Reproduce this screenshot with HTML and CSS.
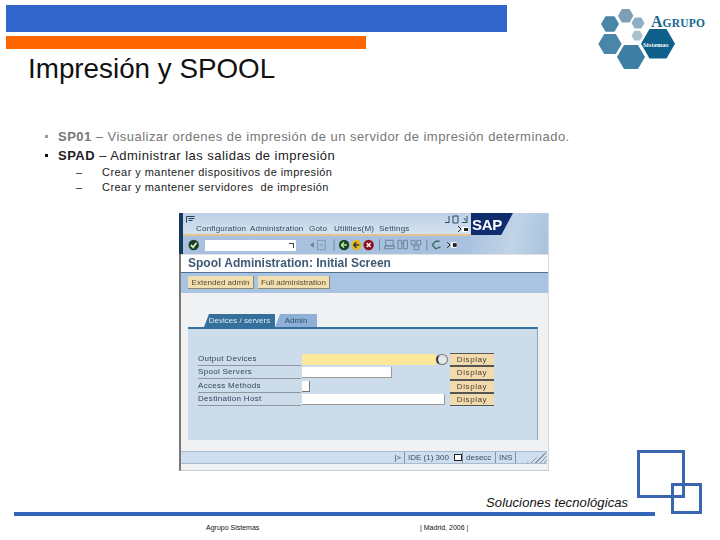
FILE: index.html
```html
<!DOCTYPE html>
<html lang="es">
<head>
<meta charset="utf-8">
<title>Impresión y SPOOL</title>
<link rel="stylesheet" href="styles.css">
</head>
<body>
<div class="slide">
  <div class="bar-blue"></div>
  <div class="bar-orange"></div>
  <h1 class="title">Impresión y SPOOL</h1>

  <svg class="logo" width="120" height="75" viewBox="590 0 120 75">
    <polygon fill="#7d9fb5" points="618,15.7 621.8,9 629.5,9 633.4,15.7 629.5,22.4 621.8,22.4"/>
    <polygon fill="#4a86a8" points="601,24 605.5,16.2 614.5,16.2 619,24 614.5,31.8 605.5,31.8"/>
    <polygon fill="#8fb0c4" points="631.5,23 634.7,17.4 641.3,17.4 644.5,23 641.3,28.6 634.7,28.6"/>
    <polygon fill="#a9c1cf" points="631.5,35.7 634.3,30.8 639.9,30.8 642.7,35.7 639.9,40.6 634.3,40.6"/>
    <polygon fill="#4a86a8" points="598.3,44 604.2,33.9 615.8,33.9 621.7,44 615.8,54.1 604.2,54.1"/>
    <polygon fill="#3d7ea3" points="617,57 624,45 638,45 645,57 638,69 624,69"/>
    <polygon fill="#0e5f8a" points="641,43.7 649.5,29 666.5,29 675,43.7 666.5,58.4 649.5,58.4"/>
    <text class="logo-word" x="651" y="27">A<tspan class="logo-caps">GRUPO</tspan></text>
    <text class="logo-sub" x="643" y="46.5">Sistemas</text>
  </svg>

  <ul class="bullets">
    <li class="dim"><b>SP01</b> – Visualizar ordenes de impresión de un servidor de impresión determinado.</li>
    <li><b>SPAD</b> – Administrar las salidas de impresión</li>
  </ul>
  <ul class="subs">
    <li>Crear y mantener dispositivos de impresión</li>
    <li>Crear y mantener servidores&nbsp; de impresión</li>
  </ul>

  <div class="sap">
    <div class="sap-top">
      <div class="sap-bars">
        <div class="menubar">
          <svg class="sys-icon" width="10" height="8" viewBox="0 0 10 8"><path d="M.5.5h8M.5.5v6M2.5 2.5h6M2.5 4.5h4" fill="none" stroke="#23405e"/></svg>
          <div class="win-ctrls">
            <svg width="23" height="9" viewBox="0 0 23 9"><path d="M0 7.5h4M4 1v7M8 1h5v7H8zM17 7.5h5M22 1v7M19 3l2 3" fill="none" stroke="#2c4a68"/></svg>
            <svg class="cust" width="10" height="7" viewBox="0 0 10 7"><rect x="4" y="1" width="6" height="5" fill="#fff"/><rect x="6" y="2" width="4" height="3" fill="#222"/><path d="M0 0l3 3-3 3" fill="none" stroke="#222"/></svg>
          </div>
          <nav class="menu">
            <span class="m1">Configuration</span>
            <span class="m2">Administration</span>
            <span class="m3">Goto</span>
            <span class="m4">Utilities(M)</span>
            <span class="m5">Settings</span>
          </nav>
        </div>
        <div class="toolbar">
          <svg class="tb-ok" width="12" height="12" viewBox="0 0 12 12"><circle cx="6" cy="6" r="5.5" fill="#1d3b2a"/><path d="M3 6l2.4 2.4L9 3.6" fill="none" stroke="#cfe8b0" stroke-width="2"/></svg>
          <div class="cmd"><span class="cmd-arrow"></span></div>
          <svg class="tb-icons" width="170" height="14" viewBox="0 0 170 14">
            <path d="M0 7l4-3v6z" fill="#6c8199"/>
            <rect x="8" y="2" width="8" height="10" fill="none" stroke="#7f93aa"/><path d="M10 7h4" stroke="#7f93aa"/>
            <g transform="translate(-3 0)">
              <path d="M28.5 1v12" stroke="#6b88a6"/>
              <circle cx="39" cy="7" r="5.5" fill="#16452a"/><path d="M36 7h6M36 7l3-3M36 7l3 3" stroke="#bfe890" stroke-width="1.5" fill="none"/>
              <circle cx="52" cy="7" r="5.5" fill="#e2bb2a"/><path d="M49 7h6M49 7l3-3M49 7l3 3" stroke="#333" stroke-width="1.5" fill="none"/>
              <circle cx="65" cy="7" r="5.5" fill="#8c1420"/><path d="M63 5l4 4M67 5l-4 4" stroke="#fff" stroke-width="1.5"/>
              <path d="M76.5 1v12" stroke="#6b88a6"/>
              <path d="M83 2h8v6h-8zM82 8h10v3H82z" fill="none" stroke="#6c8199"/>
              <path d="M96 2h4v9h-4zM102 2h4v9h-4zM100 5h2" fill="none" stroke="#6c8199"/>
              <path d="M110 2h4v5h-4zM116 2h4v5h-4zM113 8h5v4h-5z" fill="none" stroke="#6c8199"/>
              <path d="M126.5 1v12" stroke="#6b88a6"/>
              <path d="M132 7l4-4h4M132 7l4 4 5-2" fill="none" stroke="#3f6a58" stroke-width="1.5"/>
              <path d="M148 4l3 3-3 3" fill="none" stroke="#222"/><rect x="152" y="4" width="6" height="6" fill="#fff"/><rect x="154" y="5" width="4" height="4" fill="#222"/>
            </g>
          </svg>
        </div>
      </div>
      <div class="sap-brand">
        <div class="sap-logo">SAP</div>
      </div>
    </div>

    <div class="sap-title">Spool Administration: Initial Screen</div>
    <div class="app-toolbar">
      <span class="app-btn b1">Extended admin</span>
      <span class="app-btn b2">Full administration</span>
    </div>

    <div class="sap-body">
      <div class="tabs">
        <span class="tab active">Devices / servers</span>
        <span class="tab">Admin</span>
      </div>
      <div class="panel">
        <div class="form">
          <div class="row">
            <span class="lbl">Output Devices</span>
            <span class="field req"></span>
            <span class="f4"></span>
            <span class="display">Display</span>
          </div>
          <div class="row">
            <span class="lbl">Spool Servers</span>
            <span class="field w90"></span>
            <span class="display">Display</span>
          </div>
          <div class="row">
            <span class="lbl">Access Methods</span>
            <span class="field w8"></span>
            <span class="display">Display</span>
          </div>
          <div class="row">
            <span class="lbl">Destination Host</span>
            <span class="field w143"></span>
            <span class="display">Display</span>
          </div>
        </div>
      </div>
    </div>

    <div class="status">
      <span class="st st-a">|&gt;</span>
      <span class="st st-b">IDE (1) 300 <i class="st-icon"></i></span>
      <span class="st st-c">desecc</span>
      <span class="st st-d">INS</span>
      <span class="st st-e"></span>
    </div>
  </div>

  <div class="tagline">Soluciones tecnológicas</div>
  <div class="rule"></div>
  <div class="footer">
    <span class="foot-a">Agrupo Sistemas</span>
    <span class="foot-b">| Madrid, 2006 |</span>
  </div>

  <div class="sq-big"></div>
  <div class="sq-small"></div>
</div>
</body>
</html>
```
FILE: styles.css
```css
* { box-sizing: border-box; }
html, body { margin: 0; padding: 0; background: #fff; }
body { font-family: "Liberation Sans", Arial, sans-serif; color: #000; }
.slide { position: relative; width: 720px; height: 540px; overflow: hidden; padding-top: 5px; }

.bar-blue { width: 501px; height: 27px; margin-left: 6px; background: #3366cc; }
.bar-orange { width: 360px; height: 13px; margin: 4px 0 0 6px; background: #ff6600; }
.title { margin: 4px 0 0 28px; font-size: 27.8px; font-weight: 400; line-height: 32px; height: 32px; color: #111; }

.logo { position: absolute; left: 590px; top: 0; }
.logo-word { font-family: "Liberation Serif", serif; font-weight: 700; font-size: 16px; fill: #17678f; }
.logo-caps { font-size: 11.5px; letter-spacing: .2px; }
.logo-sub { font-family: "Liberation Serif", serif; font-weight: 700; font-size: 6.5px; fill: #fff; letter-spacing: .2px; }

.bullets { list-style: none; margin: 42px 0 0; padding: 0 0 0 58px; font-size: 13px; line-height: 19px; letter-spacing: .47px; color: #222; }
.bullets li { position: relative; white-space: nowrap; }
.bullets li::before { content: ""; position: absolute; left: -13px; top: 8px; width: 3px; height: 3px; background: #111; }
.bullets .dim { color: #777; }
.bullets .dim::before { background: #999; }
.subs { list-style: none; margin: 0; padding: 0 0 0 102px; font-size: 11px; line-height: 15px; letter-spacing: .45px; color: #222; }
.subs li { position: relative; white-space: nowrap; }
.subs li::before { content: "–"; position: absolute; left: -26px; top: 0; }

.sap { width: 370px; height: 258px; margin: 18px 0 0 179px; background: #eff1f2; border-left: 2px solid #777; border-right: 1px solid #d5d8da; border-bottom: 1px solid #c9cccf; display: flex; flex-direction: column; font-size: 8px; color: #33485e; filter: blur(.3px); }
.sap-top { display: flex; height: 41px; margin-left: -2px; }
.sap-bars { width: 292px; border-left: 4px solid #123a60; }
.menubar { position: relative; height: 23px; background: linear-gradient(#bcd0e6, #d6e3f0); border-bottom: 2px solid #e3c48a; }
.sys-icon { position: absolute; left: 3px; top: 3px; }
.win-ctrls { position: absolute; right: 3px; top: 2px; display: flex; flex-direction: column; align-items: flex-end; }
.cust { margin-top: 2px; }
.menu { position: absolute; left: 13px; top: 11px; white-space: nowrap; letter-spacing: .2px; }
.menu span { position: absolute; top: 0; }
.m1 { left: 0; } .m2 { left: 54px; } .m3 { left: 113px; } .m4 { left: 138px; } .m5 { left: 183px; }
.toolbar { display: flex; align-items: center; height: 18px; background: #a7c1df; padding-left: 5px; }
.cmd { width: 96px; height: 11px; margin-left: 6px; background: #fff; position: relative; }
.cmd-arrow { position: absolute; right: 2px; top: 3px; width: 5px; height: 5px; border-top: 1px solid #444; border-right: 1px solid #444; }
.tb-icons { margin-left: 14px; }
.sap-brand { flex: 1; background: linear-gradient(100deg, #a9c2df, #c1d4e6 55%, #a9c2df); position: relative; }
.sap-logo { width: 42px; height: 22px; background: #102c6e; color: #fff; font-weight: 700; font-size: 15px; line-height: 24px; padding-left: 1px; letter-spacing: -.3px; clip-path: polygon(0 0, 100% 0, 72% 100%, 0 100%); }
.sap-title { height: 19px; background: #fff; border-bottom: 1px solid #50718f; font-size: 12px; font-weight: 700; line-height: 17px; padding-left: 7px; color: #3e5a74; border-top: 1px solid #dfe3e6; white-space: nowrap; }
.app-toolbar { display: flex; gap: 4px; height: 20px; padding: 3px 0 0 7px; background: #a9c3e3; }
.app-btn { height: 13px; background: #f1dfb2; line-height: 13px; text-align: center; color: #5a4a30; border-right: 1px solid #8a8a70; border-bottom: 1px solid #8a8a70; white-space: nowrap; }
.b1 { width: 66px; } .b2 { width: 72px; }
.sap-body { flex: 1; padding: 21px 0 0 7px; }
.tabs { display: flex; height: 13px; padding-left: 16px; }
.tab { width: 42px; background: #8fb0d6; color: #2f4d6c; line-height: 13px; text-align: center; clip-path: polygon(5px 0, 100% 0, 100% 100%, 0 100%); }
.tab.active { width: 71px; background: #35709c; color: #dfeaf4; }
.panel { width: 350px; height: 113px; background: #cddceb; border-top: 2px solid #35709c; border-right: 1px solid #8fa5ba; padding: 24px 0 0 10px; }
.form { display: flex; flex-direction: column; }
.row { display: flex; align-items: center; height: 13.3px; position: relative; }
.lbl { width: 103px; height: 13px; line-height: 12px; border-bottom: 1px solid #8c979f; color: #32465a; letter-spacing: .3px; white-space: nowrap; flex: none; }
.field { height: 11px; background: #fff; margin-left: 1px; flex: none; }
.field.req { width: 134px; background: #fbe89a; }
.w90 { width: 90px; border-right: 1px solid #999; border-bottom: 1px solid #999; }
.w8 { width: 8px; border-right: 1px solid #777; border-bottom: 1px solid #777; }
.w143 { width: 143px; border-right: 1px solid #999; border-bottom: 1px solid #999; }
.f4 { position: absolute; left: 238px; top: 1px; width: 12px; height: 11px; border-radius: 50%; background: #e3e7ea; border: 1px solid #777; border-left: 2px solid #333; }
.display { position: absolute; left: 252px; top: 0; width: 44px; height: 13.3px; background: #f1dbae; border-top: 1px solid #555; border-bottom: 1px solid #555; line-height: 11px; text-align: center; letter-spacing: .6px; color: #4e3d2a; }
.status { height: 13px; width: 366px; margin-bottom: 6px; display: flex; background: #cfdeee; border-top: 1px solid #a9bccd; border-bottom: 1px solid #a9bccd; line-height: 11px; color: #3c4a66; white-space: nowrap; flex: none; }
.st { border-right: 1px solid #7e93a8; padding-left: 3px; flex: none; }
.st-a { width: 224px; text-align: right; padding-right: 3px; }
.st-b { width: 58px; }
.st-icon { display: inline-block; width: 8px; height: 7px; margin-left: 3px; background: #fff; border: 1px solid #222; vertical-align: -1px; }
.st-c { width: 33px; } .st-d { width: 20px; }
.st-e { flex: 1; border-right: 0; background: repeating-linear-gradient(135deg, #cfdeee 0 2px, #8e9aa8 2px 3px); clip-path: polygon(100% 0, 100% 100%, 0 100%); margin-left: 10px; }

.tagline { margin: 24px 0 0 486px; font-size: 13px; line-height: 15px; font-style: italic; letter-spacing: .12px; color: #111; white-space: nowrap; }
.rule { width: 641px; height: 4px; margin: 2px 0 0 14px; background: #3366b8; }
.footer { position: relative; height: 10px; margin-top: 7px; font-size: 7px; line-height: 10px; color: #111; }
.foot-a { position: absolute; left: 206px; }
.foot-b { position: absolute; left: 420px; }

.sq-big { position: absolute; left: 637px; top: 450px; width: 48px; height: 48px; border: 3px solid #3a65b0; }
.sq-small { position: absolute; left: 671px; top: 483px; width: 31px; height: 31px; border: 3px solid #3a65b0; }
```
